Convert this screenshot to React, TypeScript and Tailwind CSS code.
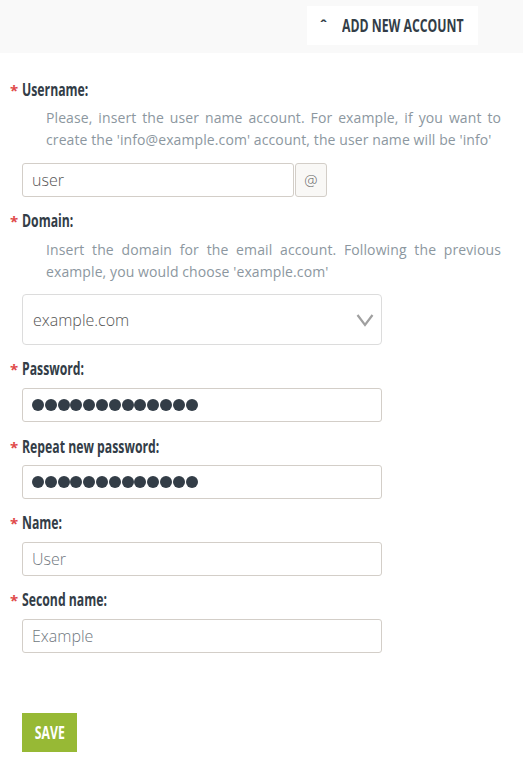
import React from "react";

const baseFont = { fontFamily: '"Open Sans", "Liberation Sans", sans-serif' };

function Label({ text }: { text: string }) {
  return (
    <div className="flex items-center h-[20px] pl-[10px]">
      <span className="w-[12px] text-[#e04a4a] text-[15px] font-bold leading-[20px]">*</span>
      <span className="inline-block origin-left scale-x-[0.72] whitespace-nowrap text-[17px] font-bold text-[#333d47] leading-[20px]">{text}</span>
    </div>
  );
}

function Dots() {
  return (
    <div className="flex gap-[0.8px]">
      {Array.from({ length: 13 }).map((_, i) => (
        <div key={i} className="w-[12px] h-[12px] rounded-full bg-[#333d47]" />
      ))}
    </div>
  );
}

function Box({ children }: { children: React.ReactNode }) {
  return (
    <div className="ml-[22px] w-[360px] h-[34px] border border-[#d3cec8] rounded-[3px] flex items-center px-[9px] bg-white">
      {children}
    </div>
  );
}

export default function App() {
  return (
    <div className="w-[523px] min-h-[767px] bg-white" style={baseFont}>
      <div className="h-[53px] bg-[#f9f9f9] flex justify-end items-start pt-[6px] pr-[45px]">
        <div className="w-[171px] h-[39px] bg-white flex items-center pl-[13px] overflow-hidden">
          <span className="text-[#333d47] text-[14px] font-bold w-[20px] shrink-0">ˆ</span>
          <span className="ml-[2px] inline-block origin-left scale-x-[0.72] whitespace-nowrap text-[17px] font-bold text-[#333d47]">ADD NEW ACCOUNT</span>
        </div>
      </div>

      <div className="pt-[27px]">
        <Label text="Username:" />
        <p className="mt-[7px] ml-[46px] mr-[22px] text-[14px] leading-[22px] text-[#8c97a0] font-normal tracking-[0.1px] text-justify">
          Please, insert the user name account. For example, if you want to create the 'info@example.com' account, the user name will be 'info'
        </p>
        <div className="mt-[12px] ml-[22px] flex h-[34px]">
          <div className="w-[272px] border border-[#d3cec8] rounded-[3px] flex items-center px-[9px] text-[16px] text-[#555] font-light">user</div>
          <div className="ml-[1px] w-[32px] border border-[#d3cec8] rounded-[3px] bg-[#f9f8f6] flex items-center justify-center text-[15px] text-[#666] font-light">@</div>
        </div>

        <div className="mt-[14px]">
          <Label text="Domain:" />
        </div>
        <p className="mt-[8px] ml-[46px] mr-[22px] text-[14px] leading-[22px] text-[#8c97a0] font-normal tracking-[0.1px] text-justify">
          Insert the domain for the email account. Following the previous example, you would choose 'example.com'
        </p>
        <div className="mt-[11px] ml-[22px] w-[360px] h-[51px] border border-[#dcdcdc] rounded-[4px] flex items-center justify-between pl-[10px] pr-[7px]">
          <span className="text-[16px] text-[#555] font-light">example.com</span>
          <svg width="18" height="14" viewBox="0 0 18 14">
            <path d="M1.5 2 L9 12 L16.5 2" fill="none" stroke="#a0a0a0" strokeWidth="2.2" />
          </svg>
        </div>

        <div className="mt-[14px]">
          <Label text="Password:" />
        </div>
        <div className="mt-[9px]">
          <Box><Dots /></Box>
        </div>

        <div className="mt-[15px]">
          <Label text="Repeat new password:" />
        </div>
        <div className="mt-[8px]">
          <Box><Dots /></Box>
        </div>

        <div className="mt-[14px]">
          <Label text="Name:" />
        </div>
        <div className="mt-[9px]">
          <Box><span className="text-[16px] text-[#707880] font-light">User</span></Box>
        </div>

        <div className="mt-[14px]">
          <Label text="Second name:" />
        </div>
        <div className="mt-[9px]">
          <Box><span className="text-[16px] text-[#707880] font-light">Example</span></Box>
        </div>

        <div className="mt-[60px] ml-[22px] w-[55px] h-[39px] bg-[#97b935] flex items-center justify-center">
          <span className="inline-block origin-center scale-x-[0.72] whitespace-nowrap text-white text-[17px] font-bold">SAVE</span>
        </div>
      </div>
    </div>
  );
}
